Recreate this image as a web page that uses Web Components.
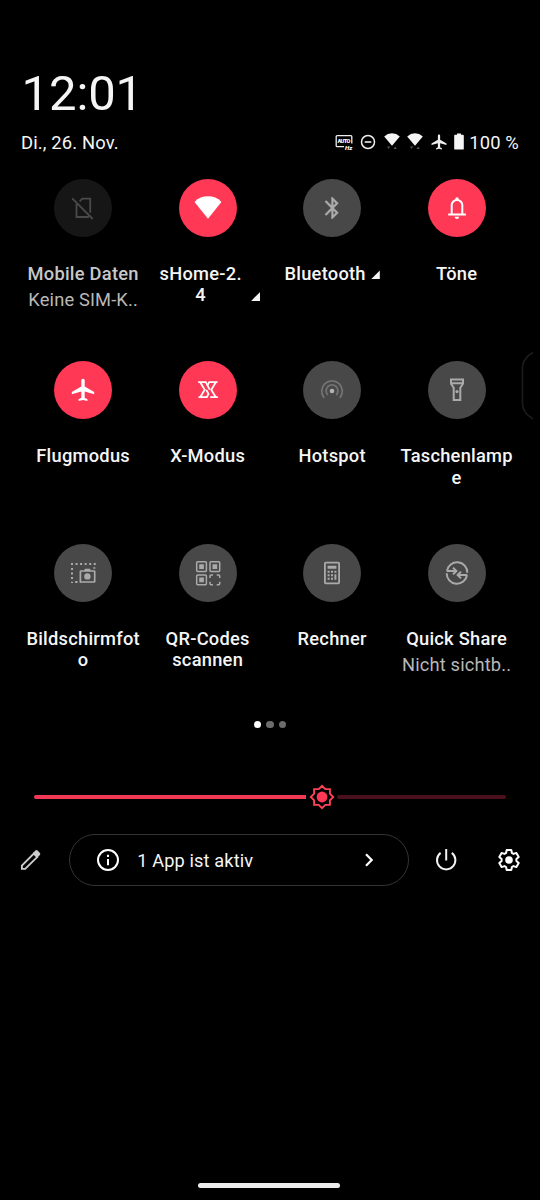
<!DOCTYPE html>
<html lang="de">
<head>
<meta charset="utf-8">
<title>Schnelleinstellungen</title>
<style>
html,body{margin:0;background:#000;height:1200px;overflow:hidden}
body{font-family:Roboto,"Noto Sans",sans-serif;color:#f5f5f5}
</style>
</head>
<body>
<quick-panel></quick-panel>
<script>
// Tile glyphs share a 58x58 box, the same size as the round tile button.
const GLYPHS = {
  sim:`<g fill="none" stroke="#4a4a4a" stroke-width="1.8"><path d="M25.6 22.3l2.7-2.7h7.9v14.2M22.5 25v13h12.3M18.2 19.4l20.5 20.6"/></g>`,
  wifi:`<path fill="#fff" d="M15.5 22.9C19.2 19 23.8 17.3 29 17.3s9.8 1.7 13.4 5.6L29 39.8z"/>`,
  bluetooth:`<path fill="#aaa" transform="translate(16.2 15.8) scale(1.1)" d="M17.71 7.71L12 2h-1v7.59L6.41 5 5 6.41 10.59 12 5 17.59 6.41 19 11 14.41V22h1l5.71-5.71-4.3-4.29zM13 5.83l1.88 1.88L13 9.59zm1.88 10.46L13 18.17v-3.76z"/>`,
  bell:`<g fill="none" stroke="#fff" stroke-width="2"><path d="M23.7 35v-8.8a5.3 5.3 0 0 1 10.6 0V35M20.2 35.4h17.7"/></g><path fill="#fff" d="M27.3 21.2v-1.3a1.7 1.7 0 0 1 3.4 0v1.3zM26.6 37.7h4.6q-.3 2.2-2.3 2.2t-2.3-2.2z"/>`,
  plane:`<path fill="#fff" transform="translate(15.56 15.4) scale(1.12)" d="M22 16v-2l-8.5-5V3.5c0-.83-.67-1.5-1.5-1.5s-1.5.67-1.5 1.5V9L2 14v2l8.5-2.5V19L8 20.5V22l4-1 4 1v-1.5L13.5 19v-5.5z"/>`,
  xmode:`<g fill="none" stroke="#fff" stroke-width="1.8"><path id="h" d="M19.200 21.200h7.600l2 3.400M21.200 21.200l4.500 7.500-4.500 7.500M19.500 36.200h8.300l1.700-3.200-2.200-4.200"/><path transform="rotate(180 29 28.700)" d="M19.200 21.200h7.600M21.200 21.200l4.500 7.500-4.500 7.500M19.500 36.200h8.300l1.700-3.200-2.200-4.200"/></g>`,
  hotspot:`<g fill="none" stroke="#737373" stroke-width="1.8"><path d="M21.2 36.9a10.3 10.3 0 1 1 15.6 0M24.8 34a5.9 5.9 0 1 1 8.4 0"/></g><circle cx="29" cy="30" r="2.3" fill="#b4b4b4"/>`,
  torch:`<g fill="none" stroke="#aaa" stroke-width="2"><path d="M23 18.4h12v4.3l-2.7 4V39h-6.600V26.700L23 22.700zM23 22.300h12"/></g><circle cx="29" cy="30.600" r="1.600" fill="#aaa"/>`,
  shot:`<g fill="none" stroke="#aaa"><path stroke-width="2" stroke-dasharray="2 2.550" d="M17 20h25M18 24v15"/><path stroke-width="2" d="M40.300 23.200v1.600M21.200 38h2.300M25.800 38h1"/><rect stroke-width="1.700" x="26.400" y="27" width="14.300" height="11" rx=".6"/></g><circle cx="33.400" cy="32.400" r="3.200" fill="#aaa"/><path fill="#aaa" d="M30 27l1-2.300h5l1 2.300z"/>`,
  qr:`<g fill="none" stroke="#aaa" stroke-width="1.500"><rect x="17.700" y="17.700" width="9.700" height="9.700" rx="1"/><rect x="31" y="17.700" width="9.700" height="9.700" rx="1"/><rect x="17.700" y="31" width="9.700" height="9.700" rx="1"/><path d="M34 31h-2q-1 0-1 1v2M37.700 31h2q1 0 1 1v2M31 37.700v2q0 1 1 1h2M37.700 40.700h2q1 0 1-1v-2"/></g><path fill="#aaa" d="M20.200 20.200h4.700v4.700h-4.700zM33.500 20.200h4.700v4.700h-4.700zM20.200 33.500h4.700v4.700h-4.700z"/>`,
  calc:`<rect x="21.900" y="18.600" width="14.200" height="20.700" rx=".8" fill="none" stroke="#aaa" stroke-width="1.800"/><path fill="#aaa" d="M24.600 21.800h8.800v3h-8.800zM24.600 26.700h2v2h-2zm3.400 0h2v2h-2zm3.400 0h2v2h-2zM24.600 30.200h2v2h-2zm3.400 0h2v2h-2zm3.400 0h2v5.600h-2zM24.600 33.800h2v2h-2zm3.400 0h2v2h-2z"/>`,
  share:`<g fill="none" stroke="#aaa" stroke-width="2"><path d="M19 27a10.200 10.200 0 0 1 20.300 1.700M39 31a10.200 10.200 0 0 1-20.300-1.700M18.700 27H27M25 23.600l3.400 3.400-3.400 3.400M39.300 31H31M33 27.600L29.600 31l3.400 3.400"/></g>`
};
const BARS = {
  auto:[18,18,`<path fill="none" stroke="#eee" stroke-width="1.300" d="M9 13.700H2.200q-1 0-1-1V3.600q0-1 1-1h13.600q1 0 1 1v7"/><text x="9" y="10" font-family="Roboto,sans-serif" font-size="5.600" font-weight="900" text-anchor="middle" textLength="13" fill="#fff">AUTO</text><text x="9.900" y="16.700" font-family="Roboto,sans-serif" font-style="italic" font-size="6.200" font-weight="900" fill="#fff">Hz</text>`],
  dnd:[16,18,`<circle cx="8" cy="9" r="6.500" fill="none" stroke="#eee" stroke-width="1.500"/><path d="M4.700 9h6.600" stroke="#eee" stroke-width="1.600"/>`],
  wifi:[16,18,`<path fill="#f5f5f5" d="M.2 3.400Q3.600.3 8 .3t7.800 3.100L8 12.700z"/><path fill="#555" d="M3 13.600h3.200l-1.600 2.500zM9.600 16.100h3.200l-1.600-2.500z"/>`],
  plane:[16,18,`<path fill="#eee" transform="translate(-1 .1) scale(.75)" d="M22 16v-2l-8.500-5V3.500c0-.83-.67-1.500-1.500-1.500s-1.500.67-1.500 1.500V9L2 14v2l8.500-2.500V19L8 20.500V22l4-1 4 1v-1.500L13.500 19v-5.500z"/>`],
  battery:[10,18,`<path fill="#f5f5f5" d="M3 .4h4v1.400h1.900q.9 0 .9.900v13q0 .9-.9.900H1.100q-.9 0-.9-.9v-13q0-.9.900-.9H3z"/>`],
  pencil:[24,24,`<path fill="none" stroke="#ccc" stroke-width="1.900" d="M2.900 20.900v-3.300L14.800 5.700l3.400 3.400L6.200 20.900z"/><path fill="#ccc" d="M14 5l2.400-2.400q1.100-1 2.200 0l2.300 2.300q1 1.100 0 2.200L18.400 9.500z"/>`],
  info:[24,24,`<circle cx="12" cy="12" r="10" fill="none" stroke="#fff" stroke-width="2"/><path fill="#fff" d="M11 10.900h2v6.300h-2zM11 6.800h2v2.100h-2z"/>`],
  chevron:[24,24,`<path fill="none" stroke="#fff" stroke-width="2.200" d="M9 6.300l5.700 5.700L9 17.700"/>`],
  power:[24,24,`<path fill="none" stroke="#f2f2f2" stroke-width="2" d="M12.200 1v11.500M6.600 4.900a9.200 9.200 0 1 0 11.200 0"/>`],
  gear:[24,24,`<path fill="none" stroke="#fff" stroke-width="2" stroke-linejoin="round" d="M9.700 2h4.600l.6 3 1.600.9 2.900-1 2.300 4-2.300 2v2.200l2.300 2-2.300 4-2.900-1-1.600.9-.6 3H9.700l-.6-3-1.600-.9-2.900 1-2.300-4 2.300-2v-2.200l-2.300-2 2.300-4 2.900 1 1.600-.9z"/><circle cx="12" cy="12" r="3.800" fill="#fff"/>`],
  sun:[26,26,`<path fill="none" stroke="#ff4258" stroke-width="1.900" d="M13 1.800l3.300 3.300h4.600v4.600L24.200 13l-3.300 3.300v4.600h-4.600L13 24.200l-3.300-3.300H5.100v-4.600L1.800 13l3.300-3.300V5.100h4.600z"/><circle cx="13" cy="13" r="5.400" fill="#ff3856"/>`]
};
function define(name, render){
  customElements.define(name, class extends HTMLElement{
    connectedCallback(){
      if(this.shadowRoot) return;
      this.attachShadow({mode:"open"}).innerHTML = render(this);
    }
  });
}
define("ui-icon", el => {
  const [w,h,body] = BARS[el.getAttribute("name")];
  return `<style>:host{display:block;flex:none;width:${w}px;height:${h}px}svg{display:block}</style><svg width="${w}" height="${h}" viewBox="0 0 ${w} ${h}">${body}</svg>`;
});
define("quick-tile", el => `<style>
:host{display:flex;flex-direction:column;align-items:center;font-size:18.300px;line-height:21.500px;letter-spacing:.25px;text-align:center}
.disc{width:58px;height:58px;border-radius:50%;background:#484848;flex:none}
:host([on]) .disc{background:#ff3856}
:host([off]) .disc{background:#161616}
:host([off]) .label{color:#c8c8c8}
svg{display:block}
.label{margin-top:26.400px;font-weight:500;display:flex;align-items:flex-end;white-space:nowrap}
.text{min-width:var(--text-width,0)}
.tri{width:9px;height:9px;background:#f5f5f5;clip-path:polygon(100% 0,100% 100%,0 100%);margin:0 0 5px 5px}
::slotted([slot=sub]){margin-top:4.500px;color:#b8b8b8;font-weight:400;white-space:nowrap;font-size:18.300px;letter-spacing:.15px}
</style><div class="disc"><svg width="58" height="58" viewBox="0 0 58 58">${GLYPHS[el.getAttribute("glyph")]}</svg></div>
<div class="label"><span class="text"><slot></slot></span>${el.hasAttribute("more")?'<i class="tri"></i>':''}</div><slot name="sub"></slot>`);
define("status-header", () => `<style>
:host{display:block;padding:0 21px}
.clock{font-size:49px;line-height:58px;letter-spacing:-.1px;padding-left:.5px}
.row{display:flex;align-items:center;justify-content:space-between;height:24px;margin-top:7px;font-size:18.400px;letter-spacing:.15px}
.icons{display:flex;align-items:center}
.icons ui-icon{margin-right:var(--g,7.500px)}
</style><div class="clock">12:01</div>
<div class="row"><span>Di., 26. Nov.</span><div class="icons">
<ui-icon name="auto" style="--g:7px"></ui-icon><ui-icon name="dnd" style="--g:8px"></ui-icon><ui-icon name="wifi"></ui-icon><ui-icon name="wifi"></ui-icon><ui-icon name="plane"></ui-icon><ui-icon name="battery" style="--g:5px"></ui-icon><span>100 %</span></div></div>`);
define("tile-grid", () => `<style>
:host{display:grid;grid-template-columns:repeat(4,124.500px);grid-auto-rows:182.500px;padding-left:20.900px}
</style><slot></slot>`);
define("page-dots", () => `<style>
:host{display:flex;justify-content:center;gap:5px}
i{width:7.500px;height:7.500px;border-radius:50%;background:#6c6c6c}
.current{background:#fff}
</style><i class="current"></i><i></i><i></i>`);
define("brightness-slider", () => `<style>
:host{display:flex;align-items:center;height:26px;padding:0 34px}
.on{width:272px;height:4px;border-radius:2px 0 0 2px;background:#f03a55}
.rest{flex:1;height:4px;border-radius:2px;background:#4a101b}
ui-icon{margin:0 2.500px 0 2.700px}
</style><div class="on"></div><ui-icon name="sun"></ui-icon><div class="rest"></div>`);
define("panel-footer", () => `<style>
:host{display:flex;align-items:center;height:52px;padding-left:19px}
.pill{box-sizing:border-box;width:340px;height:52px;border:1.500px solid #333;border-radius:26px;margin:0 25px 0 25.500px;padding:0 27px 0 26px;display:flex;align-items:center;font-size:18.200px;letter-spacing:.13px}
.pill span{flex:1;margin-left:17.700px}
.power{margin-right:39px}
</style><ui-icon name="pencil"></ui-icon>
<div class="pill"><ui-icon name="info"></ui-icon><span>1 App ist aktiv</span><ui-icon name="chevron"></ui-icon></div>
<ui-icon class="power" name="power"></ui-icon><ui-icon name="gear"></ui-icon>`);
define("quick-panel", () => `<style>
:host{display:flex;flex-direction:column;position:relative;width:540px;height:1200px;background:#000;overflow:hidden}
status-header{margin-top:65px}
tile-grid{margin-top:24.500px}
page-dots{margin-top:-5.200px}
brightness-slider{margin-top:55.500px}
panel-footer{margin-top:24.200px}
.home{width:142px;height:5px;border-radius:3px;background:#ececec;margin:auto auto 12px 197.500px}
.edge{position:absolute;left:520px;top:350px}
</style>
<status-header></status-header>
<tile-grid>
<quick-tile glyph="sim" off>Mobile Daten<span slot="sub">Keine SIM-K..</span></quick-tile>
<quick-tile glyph="wifi" on more style="--text-width:91px">sHome-2.<br>4</quick-tile>
<quick-tile glyph="bluetooth" more>Bluetooth</quick-tile>
<quick-tile glyph="bell" on>Töne</quick-tile>
<quick-tile glyph="plane" on>Flugmodus</quick-tile>
<quick-tile glyph="xmode" on>X-Modus</quick-tile>
<quick-tile glyph="hotspot">Hotspot</quick-tile>
<quick-tile glyph="torch">Taschenlamp<br>e</quick-tile>
<quick-tile glyph="shot">Bildschirmfot<br>o</quick-tile>
<quick-tile glyph="qr">QR-Codes<br>scannen</quick-tile>
<quick-tile glyph="calc">Rechner</quick-tile>
<quick-tile glyph="share">Quick Share<span slot="sub">Nicht sichtb..</span></quick-tile>
</tile-grid>
<page-dots></page-dots>
<brightness-slider></brightness-slider>
<panel-footer></panel-footer>
<div class="home"></div>
<svg class="edge" width="14" height="72" viewBox="0 0 14 72"><path d="M13 2.500Q3 8 2.500 17v37Q3 63 13 69" fill="none" stroke="#1c1c1c" stroke-width="1.600"/></svg>`);
</script>
</body>
</html>
